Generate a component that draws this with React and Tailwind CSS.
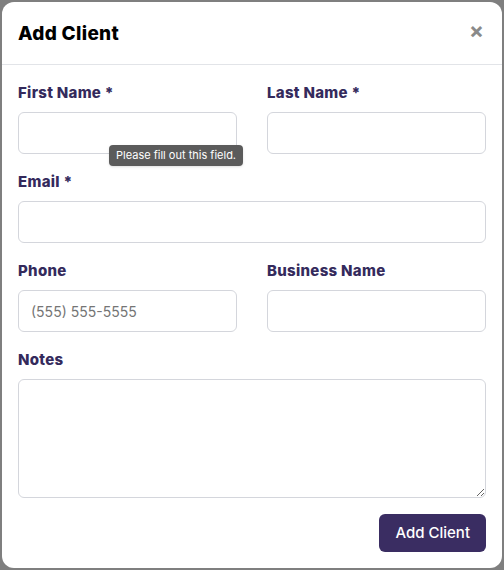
import React from 'react';

const Field = ({ label, placeholder = '', children }) => (
    <div className="flex flex-col">
        <label className="text-[15px] font-extrabold tracking-[0.3px] text-[#342a5c] leading-5 mb-[9px]">{label}</label>
        {children || (
            <input
                type="text"
                placeholder={placeholder}
                className="h-[42px] w-full rounded-md border border-[#d4d6dc] bg-white px-3 text-[14px] text-gray-800 placeholder:text-[#757575] outline-none"
            />
        )}
    </div>
);

const App = () => {
    return (
        <div className="min-h-[570px] w-full bg-[#7f7f7f] p-[2px] font-['Inter','Open_Sans',sans-serif]">
            <div className="relative flex h-[566px] flex-col rounded-xl bg-white">
                <div className="flex h-[63px] items-center justify-between border-b border-[#e2e4e8] px-4">
                    <h2 className="mt-[3px] text-[19px] font-extrabold tracking-[0.3px] text-black">Add Client</h2>
                    <button className="mb-[6px] mr-[2px] text-[22px] font-bold leading-none text-[#8a8a8a]">×</button>
                </div>

                <div className="flex flex-col gap-[18px] px-4 pt-[18px]">
                    <div className="grid grid-cols-2 gap-[30px]">
                        <div className="relative">
                            <Field label="First Name *" />
                            <div className="absolute left-[91px] top-[62px] whitespace-nowrap rounded-sm bg-[#5b5b5b] px-[7px] py-[3px] text-[11px] leading-[15px] text-white shadow">
                                Please fill out this field.
                            </div>
                        </div>
                        <Field label="Last Name *" />
                    </div>
                    <Field label="Email *" />
                    <div className="grid grid-cols-2 gap-[30px]">
                        <Field label="Phone" placeholder="(555) 555-5555" />
                        <Field label="Business Name" />
                    </div>
                    <Field label="Notes">
                        <textarea className="h-[119px] w-full rounded-md border border-[#d4d6dc] bg-white px-3 py-2 text-[14px] outline-none" />
                    </Field>
                </div>

                <div className="flex justify-end px-4 pt-4">
                    <button className="h-[38px] rounded-md bg-[#3a2d62] px-4 text-[15px] font-medium text-white">
                        Add Client
                    </button>
                </div>
            </div>
        </div>
    );
};

export default App;
